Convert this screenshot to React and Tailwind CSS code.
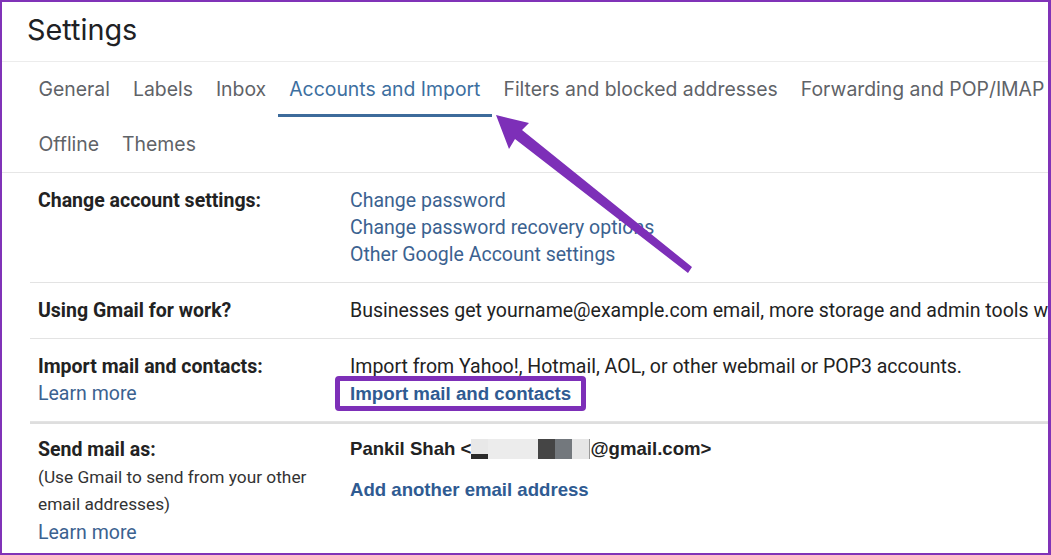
import React from 'react';

const tabsTop = ['General', 'Labels', 'Inbox', 'Accounts and Import', 'Filters and blocked addresses', 'Forwarding and POP/IMAP'];
const tabsBottom = ['Offline', 'Themes'];

const Tab = ({ label, active }) => (
    <div
        className={
            'h-[55px] shrink-0 flex items-center px-[11.5px] border-b-[3px] ' +
            (active ? 'border-[#3d6b9b] text-[#3d6f9f]' : 'border-transparent text-[#5f6368]')
        }
    >
        <span className="pt-[4px]">{label}</span>
    </div>
);

const Row = ({ label, children, last }) => (
    <div className={'ml-[28px] flex ' + (last ? '' : 'border-b border-[#e3e3e3]')}>
        <div className="w-[320px] shrink-0 pl-[8px] py-[14px] leading-[27px]">{label}</div>
        <div className="flex-1 py-[14px] leading-[27px] whitespace-nowrap">{children}</div>
    </div>
);

const Arrow = () => (
    <svg className="absolute left-0 top-0 pointer-events-none" width="1051" height="555">
        <polygon
            points="494,113 527,121 520,128 690,265 686,271 513,137 507,147"
            fill="#7d2fb8"
        />
    </svg>
);

export default function App() {
    return (
        <div className="w-[1051px] h-[555px] bg-[#8033b8] pt-[2px] pl-[2px] pr-[3px] pb-[2px]">
            <div className="relative w-full h-full bg-white overflow-hidden font-['Roboto',sans-serif] text-[19.5px] text-[#222]">
                {/* Title */}
                <div className="h-[60px] flex items-center pl-[25px] border-b border-[#ececec]">
                    <h1 className="font-['Inter',sans-serif] text-[28.8px] text-[#202124] leading-none pb-[2px]">Settings</h1>
                </div>

                {/* Tabs */}
                <div className="border-b border-[#e6e6e6] font-['Inter',sans-serif] text-[19.4px]">
                    <div className="flex pl-[25px] whitespace-nowrap">
                        {tabsTop.map((t) => (
                            <Tab key={t} label={t} active={t === 'Accounts and Import'} />
                        ))}
                    </div>
                    <div className="flex pl-[25px]">
                        {tabsBottom.map((t) => (
                            <Tab key={t} label={t} />
                        ))}
                    </div>
                </div>

                {/* Settings rows */}
                <Row label={<span className="font-bold">Change account settings:</span>}>
                    <div className="flex flex-col text-[#3b6290]">
                        <a href="#">Change password</a>
                        <a href="#">Change password recovery options</a>
                        <a href="#">Other Google Account settings</a>
                    </div>
                </Row>

                <Row label={<span className="font-bold">Using Gmail for work?</span>}>
                    Businesses get yourname@example.com email, more storage and admin tools with G Suite.
                </Row>

                <Row
                    label={
                        <div className="flex flex-col">
                            <span className="font-bold">Import mail and contacts:</span>
                            <a href="#" className="text-[#3b6290]">Learn more</a>
                        </div>
                    }
                >
                    <div className="flex flex-col items-start">
                        <span>Import from Yahoo!, Hotmail, AOL, or other webmail or POP3 accounts.</span>
                        <a
                            href="#"
                            className="-ml-[15px] -my-[4px] h-[35px] flex items-center px-[10px] border-[5px] border-[#7d2fb8] rounded-[4px] font-['Liberation_Sans',sans-serif] font-bold text-[18.7px] text-[#2f5b92]"
                        >
                            Import mail and contacts
                        </a>
                    </div>
                </Row>

                <div className="ml-[28px] border-t-2 border-[#dedede] flex">
                    <div className="w-[320px] shrink-0 pl-[8px] pt-[12px] leading-[27.5px]">
                        <div className="font-bold">Send mail as:</div>
                        <div className="text-[17.3px] text-[#333]">(Use Gmail to send from your other</div>
                        <div className="text-[17.3px] text-[#333]">email addresses)</div>
                        <a href="#" className="text-[#3b6290]">Learn more</a>
                    </div>
                    <div className="flex-1 pt-[11px] font-['Liberation_Sans',sans-serif] font-bold text-[18.6px] whitespace-nowrap">
                        <div className="leading-[27px] flex items-center">
                            <span>Pankil Shah &lt;</span>
                            <span className="flex h-[20px] items-stretch">
                                <span className="w-[17px] bg-[#e8e8e8] flex flex-col justify-end"><span className="h-[5px] bg-[#2a2a2a]"></span></span>
                                <span className="w-[50px] bg-[#ececec]"></span>
                                <span className="w-[17px] bg-[#454545]"></span>
                                <span className="w-[17px] bg-[#73787d]"></span>
                                <span className="w-[17px] bg-[#e6e6e6]"></span>
                                <span className="w-[1px] bg-[#999]"></span>
                            </span>
                            <span>@gmail.com&gt;</span>
                        </div>
                        <a href="#" className="block mt-[14px] leading-[27px] text-[#2f5b92]">Add another email address</a>
                    </div>
                </div>

                <Arrow />
            </div>
        </div>
    );
}
